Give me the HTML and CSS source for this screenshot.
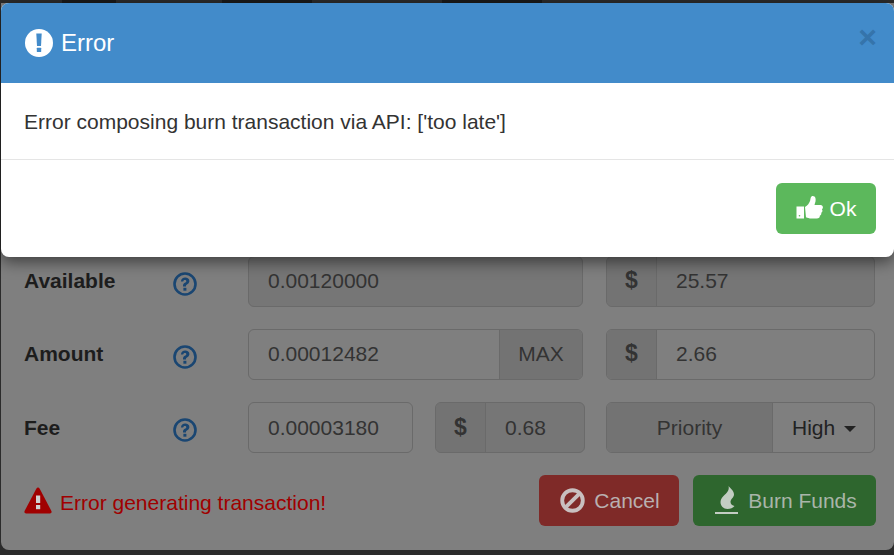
FILE: index.html
```html
<!DOCTYPE html>
<html lang="en">
<head>
<meta charset="utf-8">
<title>Error</title>
<link rel="stylesheet" href="styles.css">
</head>
<body>
<div class="page">
  <div class="tabs"><span class="tab t1"></span><span class="tab t2"></span><span class="tab t3"></span></div>
  <div class="panel">
    <div class="row nudge">
      <div class="label">Available</div>
      <div class="help"><svg viewBox="0 0 24 24" class="help-icon"><circle cx="12" cy="12" r="10.5" fill="none" stroke="#1a4672" stroke-width="2.6"/><path d="M7.900 9.400c.2-2.500 2-3.800 4.300-3.800 2.400 0 4.200 1.400 4.200 3.500 0 1.600-1 2.500-2.100 3.200-1 .6-1.300.9-1.300 1.800v.5h-3v-.8c0-1.500.6-2.300 1.800-3 1-.6 1.500-1 1.500-1.600 0-.7-.5-1.200-1.500-1.200-.9 0-1.500.6-1.600 1.500z" fill="#1a4672"/><rect x="10.400" y="15.800" width="3" height="2.900" fill="#1a4672"/></svg></div>
      <div class="group wide"><div class="value">0.00120000</div></div>
      <div class="group usd"><div class="addon dollar">$</div><div class="value">25.57</div></div>
    </div>
    <div class="row nudge">
      <div class="label">Amount</div>
      <div class="help"><svg viewBox="0 0 24 24" class="help-icon"><circle cx="12" cy="12" r="10.5" fill="none" stroke="#1a4672" stroke-width="2.6"/><path d="M7.900 9.400c.2-2.500 2-3.800 4.300-3.800 2.400 0 4.200 1.400 4.200 3.500 0 1.600-1 2.500-2.100 3.200-1 .6-1.300.9-1.300 1.800v.5h-3v-.8c0-1.500.6-2.300 1.800-3 1-.6 1.500-1 1.500-1.600 0-.7-.5-1.200-1.500-1.200-.9 0-1.500.6-1.600 1.500z" fill="#1a4672"/><rect x="10.400" y="15.800" width="3" height="2.900" fill="#1a4672"/></svg></div>
      <div class="group wide lighter"><div class="value">0.00012482</div><div class="addon max">MAX</div></div>
      <div class="group usd lighter"><div class="addon dollar">$</div><div class="value">2.66</div></div>
    </div>
    <div class="row">
      <div class="label">Fee</div>
      <div class="help"><svg viewBox="0 0 24 24" class="help-icon"><circle cx="12" cy="12" r="10.5" fill="none" stroke="#1a4672" stroke-width="2.6"/><path d="M7.900 9.400c.2-2.500 2-3.800 4.300-3.800 2.400 0 4.200 1.400 4.200 3.500 0 1.600-1 2.500-2.100 3.200-1 .6-1.300.9-1.300 1.800v.5h-3v-.8c0-1.500.6-2.300 1.800-3 1-.6 1.500-1 1.500-1.600 0-.7-.5-1.200-1.500-1.200-.9 0-1.500.6-1.600 1.500z" fill="#1a4672"/><rect x="10.400" y="15.800" width="3" height="2.900" fill="#1a4672"/></svg></div>
      <div class="group fee lighter"><div class="value">0.00003180</div></div>
      <div class="group fee-usd"><div class="addon dollar">$</div><div class="value">0.68</div></div>
      <div class="group priority lighter"><div class="addon prio">Priority</div><div class="select">High<span class="caret"></span></div></div>
    </div>
    <div class="actions">
      <div class="status">
        <svg viewBox="0 0 28 27" class="warn"><path d="M14 .6c.7 0 1.300.4 1.700 1.100l11.700 22.300c.6 1.300-.2 2.500-1.500 2.500H2.100C.8 26.500 0 25.300.6 24L12.300 1.700C12.700 1 13.300.6 14 .6z" fill="#a00000"/><rect x="12" y="8.500" width="4.200" height="7.500" fill="#d0d0d0"/><rect x="12" y="18" width="4.200" height="4.200" fill="#d0d0d0"/></svg>
        <span class="status-text">Error generating transaction!</span>
      </div>
      <div class="btn cancel"><svg viewBox="0 0 26 26" class="btn-icon"><circle cx="13" cy="13" r="10.700" fill="none" stroke="#c9c0c0" stroke-width="4"/><path d="M6 20L20 6" stroke="#c9c0c0" stroke-width="4"/></svg>Cancel</div>
      <div class="btn burn"><svg viewBox="0 0 24 29" class="btn-icon flame"><path d="M13.500 0c1.300 2 5.500 4.500 5.500 8.500 0 3-3.500 4.500-3.500 7.500 0 2.500 2 3.500 4 4-1.500 2-4 3-7 3-4 0-7-3-7-7 0-3 2-5 4.500-7.500C12.500 6.500 14.500 3.500 13.500 0z" fill="#c3cdc3"/><rect x="0" y="26" width="23" height="2" fill="#c3cdc3"/></svg>Burn Funds</div>
    </div>
  </div>
  <div class="dialog">
    <div class="dialog-head">
      <svg viewBox="0 0 28 28" class="alert"><circle cx="14" cy="14" r="14" fill="#fff"/><path d="M11.300 4.500h5.400l-.7 12.500h-4z" fill="#428bca"/><rect x="11.800" y="18.800" width="4.400" height="4.200" rx=".5" fill="#428bca"/></svg>
      <span class="dialog-title">Error</span>
      <span class="close">×</span>
    </div>
    <div class="dialog-body">Error composing burn transaction via API: ['too late']</div>
    <div class="dialog-foot">
      <div class="btn ok"><svg viewBox="0 0 27 25" class="btn-icon thumb"><path d="M.5 10.500h7.500v12H.5z" fill="#fff"/><path d="M9 11c2.500-1.500 4.500-4 5.200-6.500.4-1.800.4-4.500 2.600-4.500 2.700 0 3.200 3 2.700 5.500-.3 1.200-.8 2.300-1 3.500h6c1.600 0 2.400 1.200 2.400 2.300 0 1-.5 1.600-1 2 .5.600.7 1.200.5 2-.2.700-.6 1.200-1.200 1.500.3.700.2 1.400-.2 2-.3.400-.7.700-1.200.9.200 1.800-1 2.800-3 2.800h-5.300c-2.500 0-3.900-.8-5.500-1.300z" fill="#fff"/><circle cx="3.500" cy="19.800" r=".8" fill="#5cb85c"/></svg>Ok</div>
    </div>
  </div>
</div>
</body>
</html>
```

FILE: styles.css
```css
* { box-sizing: border-box; }
html, body { margin: 0; padding: 0; }
body { width: 894px; height: 555px; overflow: hidden; font-family: "Liberation Sans", Arial, sans-serif; font-size: 21px; background: #2b2b2b; }
.page { position: relative; width: 894px; height: 555px; overflow: hidden; background: #2b2b2b; }
.tabs { display: flex; height: 3px; padding-left: 62px; }
.tab { display: block; height: 3px; background: #1a1a1a; }
.t1 { width: 54px; margin-right: 106px; }
.t2 { width: 90px; margin-right: 130px; }
.t3 { width: 100px; }
.panel { margin-left: 1px; height: 547px; padding: 253px 19px 0 23px; background: #7f7f7f; border-radius: 0 0 8px 8px; }
.row { display: flex; align-items: center; height: 51px; margin-bottom: 22px; }
.label { width: 149px; font-weight: 700; color: #1d1d1d; }
.help { width: 75px; display: flex; padding-top: 5px; }
.help-icon { width: 24px; height: 24px; }
.group { display: flex; height: 51px; border: 1px solid #6a6a6a; border-radius: 6px; overflow: hidden; background: #767676; color: #333; align-items: stretch; }
.lighter { background: #7f7f7f; }
.wide { width: 335px; margin-right: 23px; }
.usd { width: 269px; }
.fee { width: 165px; margin-right: 22px; }
.fee-usd { width: 150px; margin-right: 21px; }
.priority { width: 269px; }
.value { flex: 1; padding: 0 19px; line-height: 49px; }
.addon { background: #737373; line-height: 49px; text-align: center; }
.nudge .label { padding-bottom: 2px; }
.nudge .value, .nudge .addon { line-height: 47px; }
.dollar { width: 50px; border-right: 1px solid #6a6a6a; font-weight: 700; font-size: 23px; }
.max { width: 83px; border-left: 1px solid #6a6a6a; }
.prio { width: 166px; border-right: 1px solid #6a6a6a; }
.select { flex: 1; line-height: 49px; padding-left: 19px; color: #222; }
.caret { display: inline-block; width: 0; height: 0; margin-left: 9px; vertical-align: 3px; border-top: 6px solid #222; border-left: 6px solid transparent; border-right: 6px solid transparent; }
.actions { display: flex; align-items: center; height: 51px; margin-top: 1px; margin-right: -1px; }
.status { flex: 1; display: flex; align-items: center; gap: 8px; color: #a00000; }
.status-text { padding-top: 4px; }
.warn { width: 28px; height: 27px; }
.btn { display: flex; align-items: center; justify-content: center; height: 51px; border-radius: 6px; }
.btn-icon { width: 25px; height: 25px; margin-right: 9px; }
.cancel { width: 140px; padding-left: 2px; background: #7f2a28; color: #b9b0b0; }
.burn { width: 183px; margin-left: 14px; padding-left: 3px; background: #2e662e; color: #a9b5a9; }
.flame { width: 24px; height: 29px; }
.dialog { position: absolute; left: 1px; top: 3px; width: 893px; height: 254px; background: #fff; border-radius: 8px; overflow: hidden; box-shadow: 0 5px 15px rgba(0,0,0,.5); }
.dialog-head { position: relative; display: flex; align-items: center; height: 80px; padding: 0 24px; background: #428bca; color: #fff; }
.alert { width: 28px; height: 28px; margin-right: 8px; }
.dialog-title { font-size: 24px; }
.close { position: absolute; right: 17px; top: 16px; font-size: 32px; font-weight: 700; line-height: 36px; color: #3574ab; }
.dialog-body { height: 77px; padding: 1px 23px 0; line-height: 76px; color: #333; border-bottom: 1px solid #e5e5e5; }
.dialog-foot { display: flex; justify-content: flex-end; padding: 23px 18px 0; }
.ok { width: 100px; background: #5cb85c; color: #fff; }
.thumb { width: 27px; height: 25px; margin-right: 7px; }
```
